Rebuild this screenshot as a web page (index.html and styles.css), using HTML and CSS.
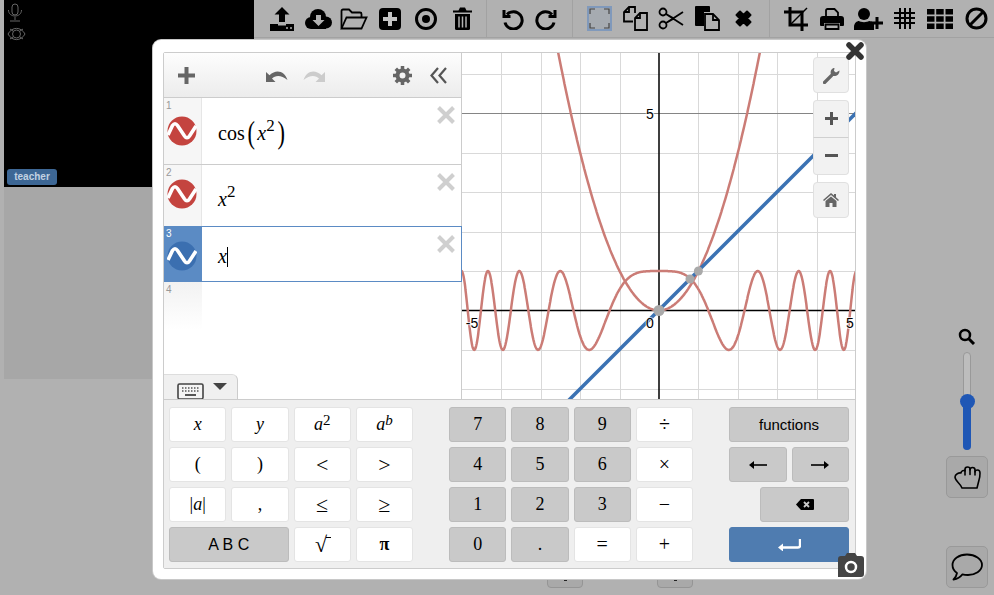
FILE: index.html
```html
<!DOCTYPE html>
<html lang="en">
<head>
    <meta charset="UTF-8">
    <meta name="viewport" content="width=device-width, initial-scale=1.0">
    <title>Whiteboard - Graphing calculator</title>
    <link rel="stylesheet" href="styles.css">
</head>
<body>
    <div class="page">
        <div class="side">
            <div class="video">
                <svg class="video-icon" width="16" height="19" viewBox="0 0 16 19"><rect x="5" y="1" width="6" height="11" rx="3"/><path d="M1.5 7c0 8 13 8 13 0M8 14v3M3 18h10"/></svg>
                <svg class="video-icon" width="19" height="14" viewBox="0 0 19 14"><path d="M1 7c4-7.500 13-7.500 17 0c-4 7.500-13 7.500-17 0z"/><circle cx="9.500" cy="7" r="4"/><path d="M3 2l3 2M16 2l-3 2M3 12l3-2M16 12l-3-2"/></svg>
                <span class="video-label">teacher</span>
            </div>
            <div class="shade"></div>
        </div>

        <div class="main">
            <div class="toolbar">
                <div class="tool-group group-file">
                    <span class="tool"><svg width="24" height="24" viewBox="0 0 24 24"><path d="M12 0l7.500 7.500H15V15H9V7.500H4.500z"/><path d="M0 17h8v1.500h8V17h8v7H0z"/><circle cx="17" cy="21" r="1" fill="#b1b1b1"/><circle cx="21" cy="21" r="1" fill="#b1b1b1"/></svg></span>
                    <span class="tool"><svg width="27" height="20" viewBox="0 0 27 20"><circle cx="6" cy="14" r="6"/><circle cx="13" cy="8" r="8"/><circle cx="21" cy="13.500" r="6"/><rect x="6" y="12" width="15" height="8"/><path d="M11 6h5v5h3.500l-6 6-6-6H11z" fill="#b1b1b1"/></svg></span>
                    <span class="tool"><svg class="line" width="28" height="22" viewBox="0 0 28 22"><path d="M1.500 20V3a1.500 1.500 0 0 1 1.500-1.500h6l3 3h8a1.500 1.500 0 0 1 1.500 1.500v3"/><path d="M1.500 20.500L6.500 9.500h20l-5 11z"/></svg></span>
                    <span class="tool"><svg width="22" height="22" viewBox="0 0 22 22"><rect width="22" height="22" rx="4"/><path d="M9 4h4v5h5v4h-5v5H9v-5H4V9h5z" fill="#c4c4c4"/></svg></span>
                    <span class="tool"><svg width="22" height="22" viewBox="0 0 22 22"><circle class="line" cx="11" cy="11" r="9.500"/><circle cx="11" cy="11" r="4"/></svg></span>
                    <span class="tool"><svg width="19" height="23" viewBox="0 0 19 23"><path d="M0 3.500h5.500L7 .5h5l1.500 3H19v2H0z"/><path d="M2 7h15v14.500a1.500 1.500 0 0 1-1.500 1.500h-12A1.500 1.500 0 0 1 2 21.500z"/><path d="M6 9.500v11M9.500 9.500v11M13 9.500v11" stroke="#b1b1b1" stroke-width="1.500"/></svg></span>
                </div>
                <div class="tool-group group-history">
                    <span class="tool tool-narrow"><svg class="line thick" width="22" height="22" viewBox="0 0 22 22"><path d="M5 6.500a8.700 8.700 0 1 1-2 8"/><path d="M2 2v6.500h6.500" /></svg></span>
                    <span class="tool tool-narrow"><svg class="line thick" width="22" height="22" viewBox="0 0 22 22"><path d="M17 6.500a8.700 8.700 0 1 0 2 8"/><path d="M20 2v6.500h-6.500"/></svg></span>
                </div>
                <div class="tool-group group-edit">
                    <span class="tool"><span class="select-box"><svg width="21" height="21" viewBox="0 0 21 21"><path d="M1 6V1h5M15 1h5v5M20 15v5h-5M6 20H1v-5" fill="none" stroke="#444" stroke-width="1.200"/></svg></span></span>
                    <span class="tool"><svg class="line" width="25" height="25" viewBox="0 0 25 25"><path d="M10 15.500H1V6l5-5h6v6"/><path d="M6 1v5H1"/><path d="M12 24V12l5-5h7v17z"/><path d="M17 7v5h-5"/></svg></span>
                    <span class="tool"><svg class="line" width="26" height="23" viewBox="0 0 26 23"><circle cx="5" cy="5" r="3.500"/><circle cx="5" cy="18" r="3.500"/><path d="M8 7l17 11M8 16L25 5M8 7l7 4M8 16l7-4"/></svg></span>
                    <span class="tool"><svg width="25" height="25" viewBox="0 0 25 25"><path d="M1 0h13a1 1 0 0 1 1 1v5H9v14H1a1 1 0 0 1-1-1V1a1 1 0 0 1 1-1z"/><path class="line" d="M10 8h8l6 6v10H10z"/><path class="line" d="M18 8v6h6"/></svg></span>
                    <span class="tool"><svg width="19" height="19" viewBox="0 0 19 19"><path d="M2.500 6l3.500-3.500 3.500 3.500L13 2.500 16.500 6 13 9.500l3.500 3.500-3.500 3.500L9.500 13 6 16.500 2.500 13 6 9.500z" stroke="#000" stroke-width="2" stroke-linejoin="round"/></svg></span>
                </div>
                <div class="tool-group group-view">
                    <span class="tool"><svg width="24" height="24" viewBox="0 0 24 24"><path d="M6 0v18h18M0 5h18v19" fill="none" stroke="#000" stroke-width="3"/><path d="M6 18L23 1" stroke="#000" stroke-width="1.500"/></svg></span>
                    <span class="tool"><svg width="24" height="22" viewBox="0 0 24 22"><path d="M6 9V2.500A1.500 1.500 0 0 1 7.500 1h7L18 4.500V9" class="line"/><path d="M3 8h18a3 3 0 0 1 3 3v6a1 1 0 0 1-1 1h-3v-3H4v3H1a1 1 0 0 1-1-1v-6a3 3 0 0 1 3-3z"/><path d="M5.500 16.500h13V21h-13z" class="line"/></svg></span>
                    <span class="tool"><svg width="29" height="22" viewBox="0 0 29 22"><circle cx="10" cy="6" r="6"/><path d="M0 22v-3c0-4 3-6 5-6 1.500 1.500 8.500 1.500 10 0 2 0 4 1 5 3v6z"/><path d="M23 9v12M17 15h12" stroke="#000" stroke-width="3"/></svg></span>
                    <span class="tool"><svg width="21" height="21" viewBox="0 0 21 21"><path d="M6 0v21M11 0v21M16 0v21M0 5h21M0 10h21M0 15h21" stroke="#000" stroke-width="2"/></svg></span>
                    <span class="tool"><svg width="26" height="20" viewBox="0 0 26 20"><path d="M0 0h7.500v5.500H0zM9.200 0h7.500v5.500H9.200zM18.500 0H26v5.500h-7.500zM0 7.200h7.500v5.500H0zM9.200 7.200h7.500v5.500H9.200zM18.500 7.200H26v5.500h-7.500zM0 14.500h7.500V20H0zM9.200 14.500h7.500V20H9.200zM18.500 14.500H26V20h-7.500z"/></svg></span>
                    <span class="tool"><svg class="line thick" width="23" height="23" viewBox="0 0 23 23"><circle cx="11.500" cy="11.500" r="9.500"/><path d="M5 18L18 5"/></svg></span>
                </div>
            </div>

            <div class="stage">
                <div class="page-nav">
                    <span class="nav-button"></span>
                    <span class="nav-button"></span>
                </div>
                <div class="dock">
                    <svg width="18" height="17" viewBox="0 0 18 17"><circle cx="7" cy="7" r="5" fill="none" stroke="#000" stroke-width="2.500"/><path d="M11 11l5 5" stroke="#000" stroke-width="3"/></svg>
                    <div class="zoom-slider"><span class="zoom-fill"></span><span class="zoom-thumb"></span></div>
                    <div class="dock-button"><svg width="27" height="23" viewBox="0 0 27 23" fill="none" stroke="#000" stroke-width="1.600" stroke-linejoin="round" stroke-linecap="round"><path d="M8 22h15l2-8c.7-2 1-4 1-7 0-2-1-3-2.500-3S21 5 21 6V4c0-1.500-1-2.500-2.500-2.500S16 2.500 16 4V3c0-1.500-1-2-2.500-2S11 2 11 3.500V5C10 4 7 4.500 7 7c-2-.5-6 1-6 4 0 4 5 6 7 11z"/><path d="M11 4v5M16 3.500v5M21 5v4"/></svg></div>
                    <div class="dock-button dock-chat"><svg width="32" height="28" viewBox="0 0 32 28" fill="none" stroke="#000" stroke-width="1.800" stroke-linejoin="round"><path d="M16 1.500c8 0 15 4.500 15 10.500s-7 10-14 10c-2 0-4-.2-5.500-.7C9.500 24 6 26 2.500 26.500c2-1.800 3-3.500 3.500-6.500C3 18 1.500 15 1.500 12 1.500 6 8 1.500 16 1.500z"/></svg></div>
                </div>
            </div>
        </div>
    </div>

    <div class="modal">
        <div class="calc">
            <div class="calc-top">
                <div class="expr-panel">
                    <div class="expr-header">
                        <svg class="head-add" width="19" height="19" viewBox="0 0 19 19"><path d="M7.500 1h4v6.500H18v4h-6.500V18h-4v-6.500H1v-4h6.500z" fill="#666"/></svg>
                        <svg class="head-undo" width="22" height="15" viewBox="0 0 22 15"><path d="M0 4v10h9.500L6 10.500C9 7.500 15 6.500 21.500 12 19 4 11 0 3.500 7.200z" fill="#666"/></svg>
                        <svg class="head-redo" width="22" height="15" viewBox="0 0 22 15"><path d="M22 4v10h-9.500l3.500-3.500C13 7.500 7 6.500.5 12 3 4 11 0 18.500 7.200z" fill="#ccc"/></svg>
                        <svg class="head-gear" width="19" height="19" viewBox="0 0 19 19"><circle cx="9.500" cy="9.500" r="5" fill="none" stroke="#666" stroke-width="4"/><path d="M9.500 0v19M0 9.500h19M2.800 2.800l13.400 13.400M16.200 2.800L2.800 16.200" stroke="#666" stroke-width="3.500" stroke-dasharray="3.500 12 3.500"/></svg>
                        <svg class="head-collapse" width="17" height="17" viewBox="0 0 17 17" fill="none" stroke="#555" stroke-width="2.200"><path d="M8 1L1.500 8.500 8 16M16 1L9.500 8.500 16 16"/></svg>
                    </div>
                    <div class="expr-list">
                        <div class="expr-row row-tall">
                            <div class="gutter"><span class="row-num">1</span><svg class="wave" width="30" height="30" viewBox="0 0 30 30"><circle cx="15" cy="15" r="14.500" fill="#c4443f"/><path d="M1 19L5.500 9.500Q8 6 10.500 9.500L17.500 20Q20 23.500 22.500 20L29 10" fill="none" stroke="#fff" stroke-width="3.600"/></svg></div>
                            <div class="math math-cos">cos<span class="paren">(</span><i>x</i><sup>2</sup><span class="paren">)</span></div>
                            <svg class="row-close" width="18" height="18" viewBox="0 0 18 18"><path d="M1.500 1.500l15 15M16.500 1.500l-15 15" stroke="#cfcfcf" stroke-width="4"/></svg>
                        </div>
                        <div class="expr-row">
                            <div class="gutter"><span class="row-num">2</span><svg class="wave" width="30" height="30" viewBox="0 0 30 30"><circle cx="15" cy="15" r="14.500" fill="#c4443f"/><path d="M1 19L5.500 9.500Q8 6 10.500 9.500L17.500 20Q20 23.500 22.500 20L29 10" fill="none" stroke="#fff" stroke-width="3.600"/></svg></div>
                            <div class="math math-square"><i>x</i><sup>2</sup></div>
                            <svg class="row-close" width="18" height="18" viewBox="0 0 18 18"><path d="M1.500 1.500l15 15M16.500 1.500l-15 15" stroke="#cfcfcf" stroke-width="4"/></svg>
                        </div>
                        <div class="expr-row row-selected">
                            <div class="gutter"><span class="row-num">3</span><svg class="wave" width="30" height="30" viewBox="0 0 30 30"><circle cx="15" cy="15" r="14.500" fill="#3b6fb0"/><path d="M1 19L5.500 9.500Q8 6 10.500 9.500L17.500 20Q20 23.500 22.500 20L29 10" fill="none" stroke="#fff" stroke-width="3.600"/></svg></div>
                            <div class="math math-line"><i>x</i><span class="cursor"></span></div>
                            <svg class="row-close" width="18" height="18" viewBox="0 0 18 18"><path d="M1.500 1.500l15 15M16.500 1.500l-15 15" stroke="#cfcfcf" stroke-width="4"/></svg>
                        </div>
                        <div class="expr-row row-empty">
                            <div class="gutter"><span class="row-num">4</span></div>
                        </div>
                    </div>
                    <div class="keys-tab">
                        <svg width="27" height="17" viewBox="0 0 27 17"><rect x="1" y="1" width="25" height="15" rx="1.500" fill="#f4f4f4" stroke="#444" stroke-width="1.600"/><path d="M5 5h17M5 8h17" stroke="#555" stroke-width="1.500" stroke-dasharray="1.500 1.500"/><path d="M8 12h11" stroke="#555" stroke-width="2"/></svg>
                        <svg width="14" height="7" viewBox="0 0 14 7"><path d="M0 0h14L7 7z" fill="#444"/></svg>
                    </div>
                </div>

                <div class="graph">
                    <svg class="graph-plot" width="393" height="346" viewBox="0 0 393 346">
                        <g id="gridLines" class="grid-lines"></g>
                        <path class="grid-major" d="M0 60.500H393"/>
                        <path class="axis" d="M197 0V346M0 257.500H393"/>
                        <path id="curveCos" class="curve-red"/>
                        <path id="curveSquare" class="curve-red"/>
                        <path class="curve-blue" d="M58 396L405 49"/>
                        <circle class="point" cx="197" cy="257.500" r="5.500"/>
                        <circle class="point" cx="228" cy="226" r="4.500"/>
                        <circle class="point" cx="236.400" cy="218" r="4.500"/>
                        <text class="tick" x="188" y="65.500" text-anchor="middle">5</text>
                        <text class="tick" x="10" y="275" text-anchor="middle">-5</text>
                        <text class="tick" x="188" y="275" text-anchor="middle">0</text>
                        <text class="tick" x="388" y="275" text-anchor="middle">5</text>
                    </svg>
                    <div class="graph-controls">
                        <div class="graph-btn"><svg width="17" height="17" viewBox="0 0 17 17"><path d="M1.500 15.500L8.500 8.500" stroke="#666" stroke-width="3.200" stroke-linecap="round"/><path d="M16.500 3.500l-3.500 2-2-1.500.5-3C9 1 7 3.500 7.800 7l2.300 2c3.500.5 6.400-1.500 6.400-5.500z" fill="#666"/></svg></div>
                        <div class="graph-btn-pair">
                            <div class="graph-btn"><svg width="13" height="13" viewBox="0 0 13 13"><path d="M5 0h3v5h5v3H8v5H5V8H0V5h5z" fill="#555"/></svg></div>
                            <div class="graph-btn"><svg width="13" height="3" viewBox="0 0 13 3"><path d="M0 0h13v3H0z" fill="#555"/></svg></div>
                        </div>
                        <div class="graph-btn"><svg width="16" height="14" viewBox="0 0 16 14"><path d="M8 0l3 2.500V1h2v3.200L16 7l-1 1-7-6-7 6-1-1z" fill="#666"/><path d="M2.500 8L8 3.500 13.500 8v6h-4v-4h-3v4h-4z" fill="#666"/></svg></div>
                    </div>
                </div>
            </div>

            <div class="keypad">
                <div class="key-group">
                    <button class="key"><i>x</i></button>
                    <button class="key"><i>y</i></button>
                    <button class="key"><i>a</i><sup>2</sup></button>
                    <button class="key"><i>a</i><sup><i>b</i></sup></button>
                    <button class="key">(</button>
                    <button class="key">)</button>
                    <button class="key key-rel">&lt;</button>
                    <button class="key key-rel">&gt;</button>
                    <button class="key">|<i>a</i>|</button>
                    <button class="key">,</button>
                    <button class="key key-rel">≤</button>
                    <button class="key key-rel">≥</button>
                    <button class="key key-gray key-abc">A B C</button>
                    <button class="key key-root"><span class="root">√</span></button>
                    <button class="key key-pi">π</button>
                </div>
                <div class="key-group">
                    <button class="key key-gray">7</button>
                    <button class="key key-gray">8</button>
                    <button class="key key-gray">9</button>
                    <button class="key key-op">÷</button>
                    <button class="key key-gray">4</button>
                    <button class="key key-gray">5</button>
                    <button class="key key-gray">6</button>
                    <button class="key key-op">×</button>
                    <button class="key key-gray">1</button>
                    <button class="key key-gray">2</button>
                    <button class="key key-gray">3</button>
                    <button class="key key-op">−</button>
                    <button class="key key-gray">0</button>
                    <button class="key key-gray">.</button>
                    <button class="key key-op">=</button>
                    <button class="key key-op">+</button>
                </div>
                <div class="key-group key-group-nav">
                    <button class="key key-gray key-functions">functions</button>
                    <button class="key key-gray"><svg width="18" height="8" viewBox="0 0 18 8"><path d="M3 4h15" stroke="#000" stroke-width="1.600"/><path d="M0 4l5-4v8z"/></svg></button>
                    <button class="key key-gray"><svg width="18" height="8" viewBox="0 0 18 8"><path d="M0 4h15" stroke="#000" stroke-width="1.600"/><path d="M18 4l-5-4v8z"/></svg></button>
                    <button class="key key-gray key-back"><svg width="18" height="11" viewBox="0 0 18 11"><path d="M5 0h12a1 1 0 0 1 1 1v9a1 1 0 0 1-1 1H5L0 5.500z"/><path d="M8 3l5 5M13 3l-5 5" stroke="#c9c9c9" stroke-width="1.800"/></svg></button>
                    <button class="key key-enter"><svg width="23" height="12" viewBox="0 0 23 12"><path d="M22 0v6.500a2 2 0 0 1-2 2H4" fill="none" stroke="#fff" stroke-width="2.400"/><path d="M0 8.500l5-4v8z" fill="#fff"/></svg></button>
                </div>
            </div>
        </div>

        <svg class="modal-close" width="18" height="18" viewBox="0 0 18 18"><path d="M3 3l12 12M15 3L3 15" stroke="#333" stroke-width="5.500" stroke-linecap="round"/></svg>
        <div class="camera"><svg width="26" height="24" viewBox="0 0 26 24"><path d="M0 6a3 3 0 0 1 3-3h4l2-3h8l2 3h4a3 3 0 0 1 3 3v15a3 3 0 0 1-3 3H0z" fill="#444"/><circle cx="13" cy="14" r="5" fill="none" stroke="#fff" stroke-width="2.500"/></svg></div>
    </div>

    <script src="script.js"></script>
</body>
</html>
```

FILE: styles.css
```css
* {
    box-sizing: border-box;
}
body {
    margin: 0;
    width: 994px;
    height: 595px;
    overflow: hidden;
    position: relative;
    background-color: #b1b1b1;
    font-family: "Liberation Sans", Arial, sans-serif;
}
.page {
    display: flex;
    height: 595px;
}

/* left column */
.side {
    width: 254px;
    padding-left: 4px;
}
.video {
    height: 187px;
    background: #000;
    padding: 3px 3px;
    display: flex;
    flex-direction: column;
    gap: 5px;
    align-items: flex-start;
    position: relative;
}
.video-icon {
    fill: none;
    stroke: #666;
    stroke-width: 1;
}
.video-label {
    position: absolute;
    left: 3px;
    top: 169px;
    width: 50px;
    height: 16px;
    background: #3d6795;
    border-radius: 3px;
    color: #c2d2e2;
    font-size: 10px;
    font-weight: bold;
    line-height: 16px;
    text-align: center;
}
.shade {
    height: 192px;
    background: #a7a7a7;
}

/* top toolbar */
.main {
    flex: 1;
    display: flex;
    flex-direction: column;
}
.toolbar {
    height: 38px;
    display: flex;
    border-bottom: 1px solid #a2a2a2;
}
.tool-group {
    display: flex;
    align-items: center;
    height: 37px;
    border-right: 1px solid #a2a2a2;
}
.group-file {
    width: 233px;
    padding-left: 10px;
}
.group-history {
    width: 86px;
    padding-left: 9px;
}
.group-edit {
    width: 197px;
    padding-left: 8px;
}
.group-view {
    flex: 1;
    padding-left: 8px;
    border-right: none;
}
.tool {
    width: 36px;
    display: flex;
    justify-content: center;
    align-items: center;
}
.tool-narrow {
    width: 33px;
}
.line,
.line path,
.line circle {
    fill: none;
    stroke: #000;
    stroke-width: 1.800;
}
.thick path,
.thick circle {
    stroke-width: 3;
}
circle.line {
    stroke-width: 3;
}
.select-box {
    width: 25px;
    height: 25px;
    display: flex;
    align-items: center;
    justify-content: center;
    border: 2px solid #8099bb;
    background: #a6abb1;
}

/* stage under the toolbar */
.stage {
    flex: 1;
    display: flex;
    align-items: flex-end;
    padding: 0 6px 7px 0;
}
.page-nav {
    display: flex;
    gap: 74px;
    margin-left: 293px;
}
.nav-button {
    width: 36px;
    height: 20px;
    border: 1px solid #959595;
    border-radius: 4px;
    background: #a9a9a9;
    position: relative;
}
.nav-button::after {
    content: "";
    position: absolute;
    left: 16px;
    top: 11px;
    width: 3px;
    height: 1px;
    background: #222;
}
.dock {
    margin-left: auto;
    width: 42px;
    display: flex;
    flex-direction: column;
    align-items: center;
}
.zoom-slider {
    width: 8px;
    height: 98px;
    margin-top: 7px;
    border: 1px solid #999;
    border-radius: 4px;
    background: #bdbdbd;
    position: relative;
}
.zoom-fill {
    position: absolute;
    left: -1px;
    right: -1px;
    bottom: -1px;
    height: 49px;
    border-radius: 4px;
    background: #1f57b5;
}
.zoom-thumb {
    position: absolute;
    left: -4.500px;
    bottom: 40px;
    width: 15px;
    height: 15px;
    border-radius: 50%;
    background: #1f57b5;
}
.dock-button {
    width: 42px;
    height: 42px;
    margin-top: 6px;
    border: 1px solid #999;
    border-radius: 5px;
    background: #a9a9a9;
    display: flex;
    align-items: center;
    justify-content: center;
}
.dock-chat {
    margin-top: 48px;
}

/* calculator dialog */
.modal {
    position: absolute;
    left: 153px;
    top: 40px;
    width: 713px;
    height: 539px;
    padding: 12px 10px 10px;
    background: #fff;
    border-radius: 8px;
    box-shadow: 0 0 0 1px #c8c8c8;
}
.modal-close {
    position: absolute;
    right: 2px;
    top: 2px;
}
.camera {
    position: absolute;
    right: 2px;
    bottom: 2px;
    width: 26px;
    height: 24px;
    display: flex;
}
.calc {
    width: 693px;
    height: 517px;
    border: 1px solid #ccc;
    border-radius: 2px;
    display: flex;
    flex-direction: column;
}
.calc-top {
    height: 346px;
    display: flex;
}

/* expression list */
.expr-panel {
    width: 298px;
    border-right: 1px solid #ccc;
    display: flex;
    flex-direction: column;
}
.expr-header {
    height: 45px;
    flex-shrink: 0;
    display: flex;
    align-items: center;
    background: linear-gradient(#fdfdfd, #ececec);
    border-bottom: 1px solid #ccc;
}
.head-add {
    margin-left: 13px;
}
.head-undo {
    margin-left: 70px;
}
.head-redo {
    margin-left: 15px;
}
.head-gear {
    margin-left: 68px;
}
.head-collapse {
    margin-left: 18px;
}
.expr-list {
    flex: 1;
    display: flex;
    flex-direction: column;
}
.expr-row {
    height: 61px;
    display: flex;
    position: relative;
}
.row-tall {
    height: 67px;
    border-bottom: 1px solid #ccc;
}
.row-selected {
    height: 56px;
    border: 1px solid #5b8bc4;
    margin-right: -1px;
}
.row-empty {
    flex: 1;
}
.gutter {
    width: 38px;
    padding: 14px 0 0 3px;
    background: #f6f6f6;
    border-right: 1px solid #e6e6e6;
    position: relative;
    flex-shrink: 0;
}
.row-tall .gutter {
    padding-top: 18px;
}
.row-selected .gutter {
    width: 37px;
    padding-left: 2px;
    background: #5b8bc4;
    border-right: none;
}
.row-empty .gutter {
    height: 48px;
    background: linear-gradient(#f2f2f2, #fff);
    border-right: none;
}
.row-num {
    position: absolute;
    left: 2px;
    top: 2px;
    font-size: 10px;
    color: #999;
}
.row-selected .row-num {
    left: 1px;
    top: 1px;
    color: #fff;
}
.wave {
    display: block;
}
.math {
    font-family: "Liberation Serif", "Times New Roman", serif;
    font-size: 20px;
    line-height: 24px;
    color: #000;
    padding-left: 16px;
}
.math i {
    font-style: italic;
}
.math sup {
    font-size: 17px;
    line-height: 0;
    vertical-align: 9px;
}
.math-cos {
    padding-top: 23px;
}
.math-square {
    padding-top: 22px;
}
.math-line {
    padding-top: 17px;
    position: relative;
}
.paren {
    font-size: 32px;
    font-weight: normal;
    line-height: 0;
    vertical-align: -3px;
    display: inline-block;
    transform: scaleX(0.7);
    margin: 0 1px;
}
.cursor {
    display: inline-block;
    width: 1px;
    height: 20px;
    background: #000;
    vertical-align: -4px;
}
.row-close {
    position: absolute;
    right: 6px;
    top: 8px;
}
.keys-tab {
    width: 74px;
    height: 25px;
    display: flex;
    align-items: flex-start;
    gap: 9px;
    padding: 8px 0 0 13px;
    background: #f0f0f0;
    border-top: 1px solid #ddd;
    border-right: 1px solid #ccc;
    border-top-right-radius: 6px;
}

/* graph */
.graph {
    flex: 1;
    position: relative;
    overflow: hidden;
}
.graph-plot {
    display: block;
}
.grid-lines path {
    stroke: #d9d9d9;
    stroke-width: 1;
}
.grid-major {
    stroke: #858585;
    stroke-width: 1;
}
.axis {
    stroke: #000;
    stroke-width: 1.500;
    fill: none;
}
.tick {
    font-family: "Liberation Sans", Arial, sans-serif;
    font-size: 14px;
    fill: #000;
    stroke: rgba(255, 255, 255, 0.7);
    stroke-width: 2px;
    paint-order: stroke;
}
.curve-red {
    fill: none;
    stroke: #cb7c76;
    stroke-width: 2.500;
}
.curve-blue {
    fill: none;
    stroke: #3b72b3;
    stroke-width: 3.500;
}
.point {
    fill: #a9a9a9;
}
.graph-controls {
    position: absolute;
    top: 4px;
    right: 6px;
    width: 36px;
    display: flex;
    flex-direction: column;
    gap: 7px;
}
.graph-btn {
    height: 36px;
    display: flex;
    align-items: center;
    justify-content: center;
    background: #f2f2f2;
    border: 1px solid #e0e0e0;
    border-radius: 4px;
}
.graph-btn-pair {
    display: flex;
    flex-direction: column;
}
.graph-btn-pair .graph-btn {
    height: 37.500px;
}
.graph-btn-pair .graph-btn:first-child {
    border-bottom-left-radius: 0;
    border-bottom-right-radius: 0;
    border-bottom-color: #d0d0d0;
}
.graph-btn-pair .graph-btn:last-child {
    border-top: none;
    border-top-left-radius: 0;
    border-top-right-radius: 0;
}

/* keypad */
.keypad {
    height: 169px;
    display: flex;
    gap: 36px;
    padding: 7px 5px 0 5px;
    background: #efefef;
    border-top: 1px solid #ccc;
}
.key-group {
    width: 244px;
    display: grid;
    grid-template-columns: repeat(4, 57.250px);
    grid-auto-rows: 35px;
    gap: 5px;
}
.key-group-nav {
    width: 120px;
    grid-template-columns: repeat(2, 57.500px);
}
.key {
    padding: 0;
    display: flex;
    align-items: center;
    justify-content: center;
    font-family: "Liberation Serif", "Times New Roman", serif;
    font-size: 18px;
    color: #000;
    background: #fff;
    border: 1px solid #e4e4e4;
    border-radius: 3px;
}
.key sup {
    font-size: 15px;
    line-height: 0;
    margin-top: -9px;
}
.key-gray {
    background: #c9c9c9;
    border-color: #bcbcbc;
}
.key-rel {
    font-size: 22px;
}
.key-op {
    font-size: 20px;
}
.key-pi {
    font-weight: bold;
}
.key-root {
    font-size: 22px;
}
.root {
    position: relative;
    padding-right: 2px;
}
.root::after {
    content: "";
    position: absolute;
    left: 100%;
    top: 5px;
    width: 5px;
    height: 1px;
    margin-left: -3px;
    background: #000;
}
.key-abc {
    grid-column: span 2;
    font-family: "Liberation Sans", Arial, sans-serif;
    font-size: 16px;
}
.key-functions {
    grid-column: span 2;
    font-family: "Liberation Sans", Arial, sans-serif;
    font-size: 15px;
}
.key-back {
    grid-column: span 2;
    width: 89px;
    justify-self: end;
}
.key-enter {
    grid-column: span 2;
    background: #4f7cb0;
    border-color: #4f7cb0;
}
```

FILE: script.js
```js
// graph setup, 39.4px for one unit
var unit = 39.4;
var originX = 197;
var originY = 257.5;

var grid = '';
for (var i = -4; i <= 4; i++) {
    if (i == 0) continue;
    grid += '<path d="M' + (Math.round(originX + i * unit) + 0.5) + ' 0V346"/>';
}
for (var j = -2; j <= 6; j++) {
    if (j == 0 || j == 5) continue;
    grid += '<path d="M0 ' + (Math.round(originY - j * unit) + 0.5) + 'H393"/>';
}
document.getElementById('gridLines').innerHTML = grid;

function plot(fn, from, to, step) {
    var d = '';
    for (var t = from; t <= to; t += step) {
        d += (d == '' ? 'M' : 'L') + (originX + t * unit).toFixed(1) + ' ' + (originY - fn(t) * unit).toFixed(1);
    }
    return d;
}

document.getElementById('curveCos').setAttribute('d', plot(function(t) { return Math.cos(t * t); }, -5.1, 5.1, 0.01));
document.getElementById('curveSquare').setAttribute('d', plot(function(t) { return t * t; }, -2.8, 2.8, 0.02));
```
